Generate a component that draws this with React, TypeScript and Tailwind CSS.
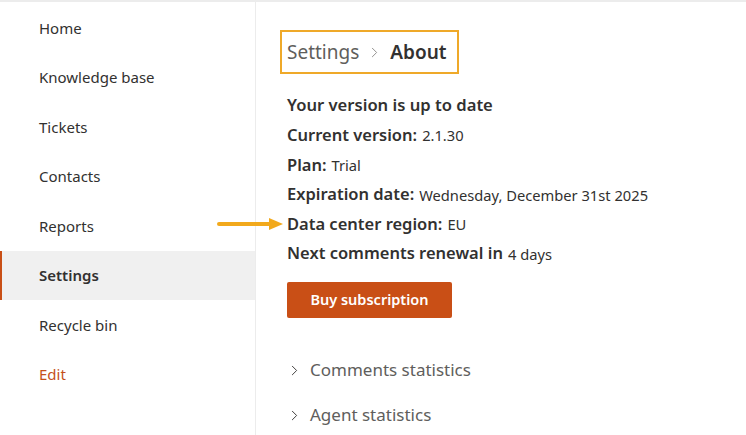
import { ChevronRight } from 'lucide-react'

const navItems = ['Home', 'Knowledge base', 'Tickets', 'Contacts', 'Reports', 'Settings', 'Recycle bin']

const details = [
  { label: 'Current version:', value: '2.1.30' },
  { label: 'Plan:', value: 'Trial' },
  { label: 'Expiration date:', value: 'Wednesday, December 31st 2025' },
  { label: 'Data center region:', value: 'EU' },
  { label: 'Next comments renewal in', value: '4 days' },
]

function Arrow() {
  return (
    <svg width="68" height="14" viewBox="0 0 68 14" className="absolute left-[-70px] top-1/2 -translate-y-1/2">
      <line x1="2" y1="7" x2="56" y2="7" stroke="#f2a91c" strokeWidth="4" strokeLinecap="round" />
      <polygon points="52,1 66,7 52,13" fill="#f2a91c" />
    </svg>
  )
}

export default function App() {
  return (
    <div
      className="w-[746px] h-[435px] overflow-hidden bg-white flex border-t-2 border-[#ececec] text-[#323130]"
      style={{ fontFamily: '"Noto Sans", "Open Sans", sans-serif' }}
    >
      {/* Sidebar */}
      <nav className="w-[256px] shrink-0 border-r border-[#ececec] pt-px flex flex-col">
        {navItems.map(item => {
          const active = item === 'Settings'
          return (
            <div
              key={item}
              className={
                active
                  ? 'h-[49.5px] flex items-center pl-[37px] text-[15px] bg-[#f0f0f0] border-l-2 border-[#c94f16] font-semibold'
                  : 'h-[49.5px] flex items-center pl-[39px] text-[15px]'
              }
            >
              {item}
            </div>
          )
        })}
        <div className="h-[49.5px] flex items-center pl-[39px] text-[15px] text-[#c4501b]">Edit</div>
      </nav>

      {/* Content */}
      <main className="flex-1 pl-[24px] pt-[28px]">
        <div className="inline-flex items-center gap-[7px] border-2 border-[#efa929] h-[44px] pl-[5px] pr-[10px]">
          <span className="text-[19px] text-[#605e5c]">Settings</span>
          <ChevronRight size={17} strokeWidth={1.3} className="text-[#8a8886]" />
          <span className="text-[19px] font-semibold">About</span>
        </div>

        <div className="pl-[7px] mt-[17px] flex flex-col">
          <div className="h-[29.6px] flex items-center text-[16.6px] font-semibold">Your version is up to date</div>
          {details.map(d => (
            <div key={d.label} className="relative h-[29.6px] flex items-center gap-[5px]">
              {d.label === 'Data center region:' && <Arrow />}
              <span className="text-[16.5px] font-semibold">{d.label}</span>
              <span className="text-[14.7px]">{d.value}</span>
            </div>
          ))}

          <button className="mt-[13px] w-[165px] h-[36px] rounded-[2px] bg-[#c94f16] text-white text-[14.5px] font-semibold">
            Buy subscription
          </button>

          <div className="mt-[30px] flex flex-col">
            {['Comments statistics', 'Agent statistics'].map(s => (
              <div key={s} className="h-[45px] flex items-center gap-[7px] text-[17px] text-[#605e5c]">
                <ChevronRight size={17} strokeWidth={1.3} className="text-[#323130] -ml-[1px]" />
                {s}
              </div>
            ))}
          </div>
        </div>
      </main>
    </div>
  )
}
